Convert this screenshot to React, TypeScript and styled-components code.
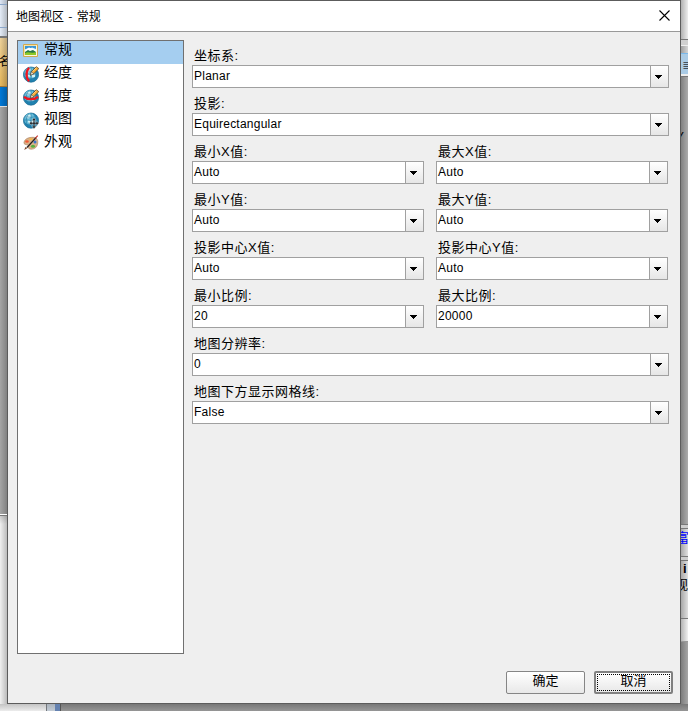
import React from 'react';
import styled, { createGlobalStyle, css } from 'styled-components';

const Global = createGlobalStyle`
  * { box-sizing: border-box; }
  html, body { margin: 0; padding: 0; overflow: hidden; }
  body { font-family: "Liberation Sans", "Noto Sans CJK SC", sans-serif; color: #000; }
`;

const Desktop = styled.div`
  width: 688px;
  height: 711px;
  display: grid;
  grid-template-columns: 7px 674px 7px;
  grid-template-rows: 704px 7px;
  overflow: hidden;
`;

const Strip = styled.div`
  display: flex;
  flex-direction: column;
  overflow: hidden;
`;

const Band = styled.div<{ $h: number; $bg: string }>`
  flex: none;
  height: ${p => p.$h}px;
  background: ${p => p.$bg};
`;

const Peek = styled(Band)<{ $color?: string; $size?: number; $bold?: boolean }>`
  overflow: hidden;
  white-space: nowrap;
  font-size: ${p => p.$size ?? 12}px;
  line-height: ${p => p.$h}px;
  font-weight: ${p => (p.$bold ? 700 : 400)};
  color: ${p => p.$color ?? '#000'};
`;

const Clip = styled.span<{ $shift: number }>`
  display: inline-block;
  margin-left: ${p => p.$shift}px;
`;

const Footing = styled.div`
  grid-column: 1 / -1;
  display: flex;
`;

const Segment = styled.div<{ $w?: number; $bg: string }>`
  ${p => (p.$w ? css`width: ${p.$w}px;` : css`flex: 1;`)}
  background: ${p => p.$bg};
`;

const Dialog = styled.div`
  display: flex;
  flex-direction: column;
  background: #efefef;
  border: 1px solid #5c5c5c;
`;

const TitleBar = styled.div`
  flex: none;
  height: 31px;
  display: flex;
  align-items: center;
  justify-content: space-between;
  padding: 0 10px 1px 8px;
  background: #fff;
  border-bottom: 1px solid #999;
  font: 12px/16px "Noto Sans CJK SC", sans-serif;
  word-spacing: 1.6px;
  & > span { height: 16px; }
`;

const Body = styled.div`
  flex: none;
  display: flex;
  gap: 8px;
  padding: 8px 0 0 9px;
`;

const Sidebar = styled.div`
  width: 167px;
  height: 614px;
  background: #fff;
  border: 1px solid #707070;
`;

const NavItem = styled.div<{ $active?: boolean }>`
  height: 23px;
  display: flex;
  align-items: flex-start;
  gap: 5px;
  padding-left: 5px;
  font: 14px/15px "Noto Sans CJK SC", sans-serif;
  background: ${p => (p.$active ? '#a5cef0' : 'transparent')};
  & > svg { flex: none; margin-top: 2px; }
`;

const NavLabel = styled.span`
  height: 20px;
`;

const Form = styled.div`
  width: 477px;
  display: flex;
  flex-direction: column;
  padding-top: 6px;
`;

const Row = styled.div`
  display: flex;
  gap: 12px;
`;

const FieldBox = styled.div<{ $half?: boolean }>`
  width: ${p => (p.$half ? 232 : 477)}px;
  height: 48px;
`;

const Label = styled.div`
  height: 19px;
  padding-left: 2px;
  font: 13px/19px "Liberation Sans", "Noto Sans CJK SC", sans-serif;
  letter-spacing: 0.5px;
  white-space: nowrap;
`;

const Combo = styled.div`
  height: 23px;
  display: flex;
  background: #fff;
  border: 1px solid #a0a0a0;
`;

const Value = styled.div`
  flex: 1;
  padding-left: 1px;
  font-size: 12px;
  line-height: 21px;
  letter-spacing: 0.24px;
`;

const DropButton = styled.div`
  width: 18px;
  display: flex;
  align-items: center;
  padding-left: 4px;
  border-left: 1px solid #a0a0a0;
  background: linear-gradient(#fff, #e6e6e6);
`;

const Actions = styled.div`
  display: flex;
  justify-content: flex-end;
  gap: 9px;
  padding: 17px 7px 0 0;
`;

const Button = styled.div<{ $focused?: boolean }>`
  width: 79px;
  height: 23px;
  padding: 1px;
  border: ${p => (p.$focused ? '2px solid #808080' : '1px solid #858585')};
  border-radius: 2px;
  background: linear-gradient(#fff, #e8e8e8);
`;

const Focus = styled.div<{ $on?: boolean }>`
  height: 100%;
  border: 1px dotted ${p => (p.$on ? '#000' : 'transparent')};
  text-align: center;
  font: 13px "Noto Sans CJK SC", sans-serif;
  line-height: ${p => (p.$on ? 10 : 12)}px;
`;

const Arrow = () => (
  <svg width="7" height="4" viewBox="0 0 7 4" shapeRendering="crispEdges">
    <path d="M0 0h7v1h-1v1h-1v1h-1v1h-1v-1h-1v-1h-1v-1h-1z" fill="#000" />
  </svg>
);

const CloseIcon = () => (
  <svg width="11" height="11" viewBox="0 0 11 11">
    <path d="M.5.5l10 10M10.5.5l-10 10" stroke="#000" strokeWidth="1.1" />
  </svg>
);

const PictureIcon = () => (
  <svg width="16" height="16" viewBox="0 0 16 16">
    <path d="M.5 1.5h14v12H.5z" fill="#fff8da" stroke="#d2a950" />
    <path d="M1.5 12.5v-10h12" fill="none" stroke="#f7e2a3" />
    <path d="M2 3h11v9H2z" fill="#e6f7fc" />
    <path d="M2 3h11v3L9 4.5 5 7 2 6z" fill="#3a95d4" />
    <path d="M3 6l3-1.5L10 6l3 1v1H2z" fill="#fff" />
    <path d="M2 9l3-2 2 1 3-1 3 2v1H2z" fill="#257847" />
    <path d="M2 10c3-2 7 1 11-1v3H2z" fill="#8cc927" />
  </svg>
);

const GlobeBase = () => (
  <>
    <circle cx="8" cy="8.6" r="7.6" fill="#1f83b2" stroke="#17698f" strokeWidth=".7" />
    <circle cx="7.2" cy="7.2" r="5.9" fill="#67bdd9" />
    <path d="M2.5 5L5 2.5l3 .3v2.6l-3 1zM8.7 8h3.5v3l-3 .6zM4.8 8l2.5.4V11l-2.1-.4z" fill="#d3f1f5" />
    <path d="M1 7.8q7 1.5 14 0M2.3 4.7q5.7 1.3 11.3 0M2 12q6 1.2 12 0M8 1v15M5.4 2Q1 8.5 5.4 15.5M10.6 2q4.4 6.5 0 13.5" fill="none" stroke="#217aa5" strokeWidth=".6" />
  </>
);

const Pencil = () => (
  <g>
    <path d="M7.3 9.2l1.2-3.4L13.2.7l2.6 1.9-5 5.1z" fill="#f8ac36" stroke="#56401f" strokeWidth=".8" />
    <path d="M9.5 5.6l4-4" stroke="#ffe29e" strokeWidth=".8" />
    <path d="M7.3 9.2l1.2-3.4 2.3 1.9z" fill="#fff5dc" stroke="#3b3b3b" strokeWidth=".5" />
  </g>
);

const LongitudeIcon = () => (
  <svg width="16" height="17" viewBox="0 0 16 17">
    <GlobeBase />
    <path d="M6.4 1.9C2.7 4 2.7 13.2 6.4 15" fill="none" stroke="#f01520" strokeWidth="2.3" />
    <Pencil />
  </svg>
);

const LatitudeIcon = () => (
  <svg width="16" height="17" viewBox="0 0 16 17">
    <GlobeBase />
    <path d="M1 7.8c3.5 3.2 10.5 3.2 14 0" fill="none" stroke="#f01520" strokeWidth="2.3" />
    <Pencil />
  </svg>
);

const ViewIcon = () => (
  <svg width="16" height="17" viewBox="0 0 16 17">
    <GlobeBase />
    <path d="M11 5.8l2.2 2.4h-1.4v2.2h1.5V9l2.5 2.2-2.5 2.3V12h-1.5v2.3h1.4L11 16.7l-2.2-2.4h1.4V12H8.7v1.5l-2.5-2.3L8.7 9v1.4h1.5V8.2H8.8z" fill="#24272b" stroke="#e7eff2" strokeWidth=".4" />
  </svg>
);

const PaletteIcon = () => (
  <svg width="16" height="16" viewBox="0 0 16 16">
    <path d="M1 7.2C2 3.5 6 2.3 10 2.3c4 0 5.5 3 4.5 7-.8 4-4.5 5.3-7.5 4.8-3-.6 0-3-2.3-4C2.6 9.2.5 9.6 1 7.2z" fill="#d9b189" stroke="#a77a54" strokeWidth=".6" />
    <ellipse cx="4" cy="6.5" rx="1.8" ry="1.3" fill="#f15a36" />
    <ellipse cx="8" cy="4.2" rx="1.7" ry="1.1" fill="#f4b64b" />
    <circle cx="12" cy="7" r="1.5" fill="#3973ca" />
    <ellipse cx="10" cy="11.3" rx="2.1" ry="1.5" fill="#57b13e" />
    <path d="M4 12.5L13 2.6" stroke="#25211f" strokeWidth="1.3" />
    <path d="M1.2 15l1.3-3 2 .9z" fill="#744329" />
    <path d="M12.3 3.3L14.7.6" stroke="#c33028" strokeWidth="1.2" />
  </svg>
);

const navItems = [
  { text: '常规', Icon: PictureIcon },
  { text: '经度', Icon: LongitudeIcon },
  { text: '纬度', Icon: LatitudeIcon },
  { text: '视图', Icon: ViewIcon },
  { text: '外观', Icon: PaletteIcon },
];

const rows = [
  [['坐标系:', 'Planar']],
  [['投影:', 'Equirectangular']],
  [['最小X值:', 'Auto'], ['最大X值:', 'Auto']],
  [['最小Y值:', 'Auto'], ['最大Y值:', 'Auto']],
  [['投影中心X值:', 'Auto'], ['投影中心Y值:', 'Auto']],
  [['最小比例:', '20'], ['最大比例:', '20000']],
  [['地图分辨率:', '0']],
  [['地图下方显示网格线:', 'False']],
];

const shadeL = 'linear-gradient(90deg, transparent, rgba(0,0,0,.22))';
const shadeR = 'linear-gradient(270deg, transparent, rgba(0,0,0,.25))';

export default function App() {
  return (
    <>
      <Global />
      <Desktop>
        <Strip>
          <Band $h={4} $bg={`${shadeL}, #dce6f4`} />
          <Band $h={1} $bg="#8ba6c8" />
          <Band $h={22} $bg={`${shadeL}, #e4ecf7`} />
          <Band $h={1} $bg="#8ba6c8" />
          <Band $h={8} $bg={`${shadeL}, #e4ecf7`} />
          <Band $h={2} $bg="#777" />
          <Peek $h={48} $bg={`${shadeL}, linear-gradient(#f0d39b, #e8b95c)`}><Clip $shift={-1}>名</Clip></Peek>
          <Band $h={1} $bg="#a37531" />
          <Band $h={19} $bg={`${shadeL}, #0078d7`} />
          <Band $h={1} $bg="#ddd" />
          <Band $h={407} $bg={`${shadeL}, #a6a6a6`} />
          <Band $h={1} $bg="#fff" />
          <Band $h={1} $bg="#777" />
          <Band $h={188} $bg={`${shadeL}, linear-gradient(#cfcfcf, #f0f0f0 8px)`} />
        </Strip>
        <Dialog>
          <TitleBar>
            <span>地图视区 - 常规</span>
            <CloseIcon />
          </TitleBar>
          <Body>
            <Sidebar>
              {navItems.map(({ text, Icon }, i) => (
                <NavItem key={text} $active={i === 0}>
                  <Icon />
                  <NavLabel>{text}</NavLabel>
                </NavItem>
              ))}
            </Sidebar>
            <Form>
              {rows.map((fields, i) => (
                <Row key={i}>
                  {fields.map(([label, value]) => (
                    <FieldBox key={label} $half={fields.length > 1}>
                      <Label>{label}</Label>
                      <Combo>
                        <Value>{value}</Value>
                        <DropButton><Arrow /></DropButton>
                      </Combo>
                    </FieldBox>
                  ))}
                </Row>
              ))}
            </Form>
          </Body>
          <Actions>
            <Button><Focus>确定</Focus></Button>
            <Button $focused><Focus $on>取消</Focus></Button>
          </Actions>
        </Dialog>
        <Strip>
          <Band $h={39} $bg={`${shadeR}, #ededed`} />
          <Band $h={1} $bg="#777" />
          <Band $h={5} $bg="#d0d0d0" />
          <Band $h={1} $bg="#eee" />
          <Band $h={7} $bg={`${shadeR}, #d5d5d5`} />
          <Band $h={1} $bg="#79b8ea" />
          <Peek $h={20} $bg="#aacbe5" $size={14} $color="#46515c"><Clip $shift={1}>≣</Clip></Peek>
          <Band $h={2} $bg="#eee" />
          <Band $h={1} $bg="#777" />
          <Band $h={55} $bg={`${shadeR}, #ababab`} />
          <Peek $h={8} $bg={`${shadeR}, #ababab`} $bold><Clip $shift={-1}>⁄</Clip></Peek>
          <Band $h={384} $bg={`${shadeR}, #ababab`} />
          <Band $h={1} $bg="#777" />
          <Band $h={3} $bg="#ccc" />
          <Band $h={1} $bg="#777" />
          <Peek $h={18} $bg={`${shadeR}, #e0e0e0`} $color="#00f" $size={13}><Clip $shift={-5}>富</Clip></Peek>
          <Band $h={9} $bg={`${shadeR}, #e0e0e0`} />
          <Band $h={1} $bg="#777" />
          <Band $h={3} $bg="#ccc" />
          <Band $h={1} $bg="#777" />
          <Peek $h={15} $bg={`${shadeR}, #e0e0e0`} $bold $size={13}><Clip $shift={2}>i</Clip></Peek>
          <Peek $h={17} $bg={`${shadeR}, #e0e0e0`} $size={13}><Clip $shift={-6}>视图</Clip></Peek>
          <Band $h={25} $bg={`${shadeR}, #e0e0e0`} />
          <Band $h={1} $bg="#777" />
          <Band $h={22} $bg={`${shadeR}, #f0f0f0`} />
          <Band $h={1} $bg="#999" />
          <Band $h={62} $bg={`${shadeR}, #a6a6a6`} />
        </Strip>
        <Footing>
          <Segment $w={46} $bg="linear-gradient(#c4c4c4, #ececec)" />
          <Segment $w={1} $bg="#73777c" />
          <Segment $w={8} $bg="linear-gradient(#aab2bb, #c3ccd6)" />
          <Segment $w={5} $bg="#6582b0" />
          <Segment $w={1} $bg="#555" />
          <Segment $bg="linear-gradient(#777, #969696)" />
        </Footing>
      </Desktop>
    </>
  );
}
